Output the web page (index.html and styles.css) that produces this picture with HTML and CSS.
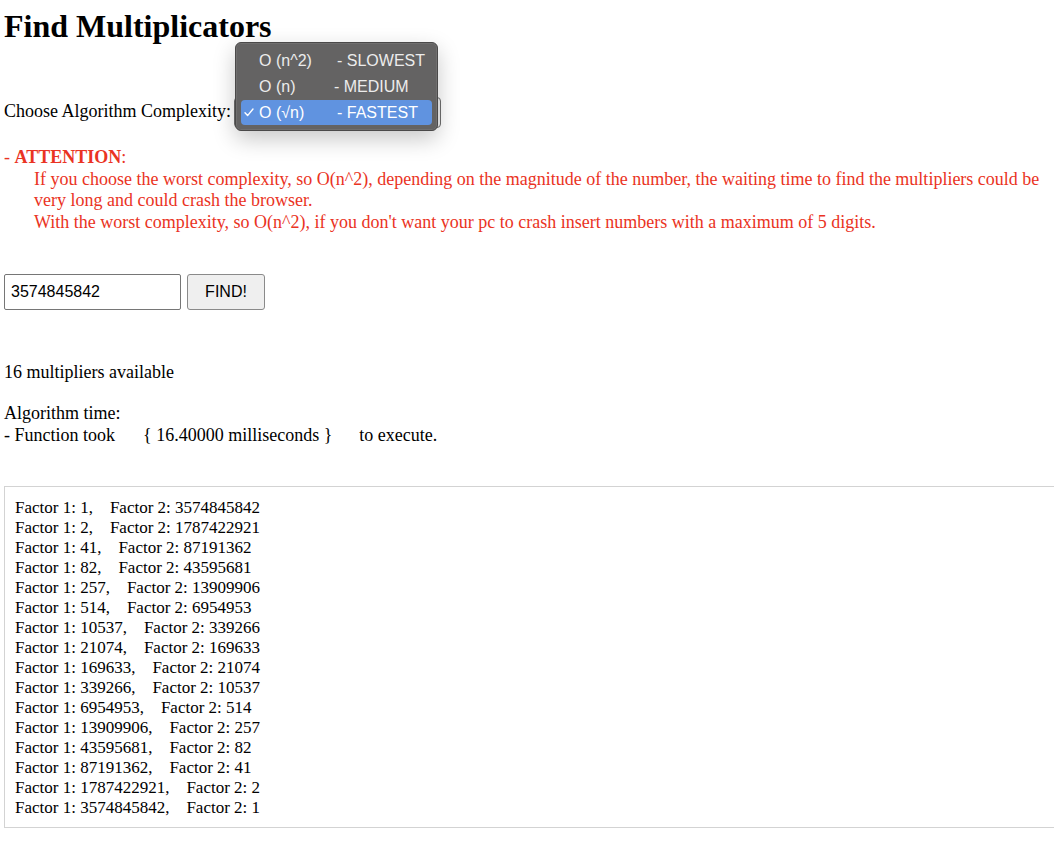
FILE: index.html
```html
<!DOCTYPE html>
<html lang="en">
<head>
<meta charset="utf-8">
<title>Find Multiplicators</title>
<link rel="stylesheet" href="styles.css">
</head>
<body>
<h1 class="title">Find Multiplicators</h1>

<div class="algo-row">
  <label class="algo-label">Choose Algorithm Complexity:</label>
  <div class="select-wrap">
    <div class="select-box"></div>
    <ul class="menu">
      <li class="menu-item"><span class="check"></span><span class="opt-name">O (n^2)</span><span class="opt-desc">- SLOWEST</span></li>
      <li class="menu-item"><span class="check"></span><span class="opt-name">O (n)</span><span class="opt-desc opt-desc-medium">- MEDIUM</span></li>
      <li class="menu-item is-selected"><span class="check"><svg width="10" height="9" viewBox="0 0 10 9"><polyline points="1,4.8 3.6,7.6 9,1" fill="none" stroke="#ffffff" stroke-width="1.4" stroke-linecap="round" stroke-linejoin="round"/></svg></span><span class="opt-name">O (√n)</span><span class="opt-desc">- FASTEST</span></li>
    </ul>
  </div>
</div>

<div class="attention">
  <div class="attention-head">- <strong>ATTENTION</strong>:</div>
  <div class="attention-body">
    <div class="att-line">If you choose the worst complexity, so O(n^2), depending on the magnitude of the number, the waiting time to find the multipliers could be</div>
    <div class="att-line">very long and could crash the browser.</div>
    <div class="att-line">With the worst complexity, so O(n^2), if you don't want your pc to crash insert numbers with a maximum of 5 digits.</div>
  </div>
</div>

<div class="find-row">
  <input class="num-input" type="text" value="3574845842">
  <button class="find-btn" type="button">FIND!</button>
</div>

<p class="count">16 multipliers available</p>

<div class="timing">
  <div>Algorithm time:</div>
  <div>- Function took<span class="took-value">{ 16.40000 milliseconds }</span>to execute.</div>
</div>

<div class="results">
  <div>Factor 1: 1,&nbsp;&nbsp;&nbsp; Factor 2: 3574845842</div>
  <div>Factor 1: 2,&nbsp;&nbsp;&nbsp; Factor 2: 1787422921</div>
  <div>Factor 1: 41,&nbsp;&nbsp;&nbsp; Factor 2: 87191362</div>
  <div>Factor 1: 82,&nbsp;&nbsp;&nbsp; Factor 2: 43595681</div>
  <div>Factor 1: 257,&nbsp;&nbsp;&nbsp; Factor 2: 13909906</div>
  <div>Factor 1: 514,&nbsp;&nbsp;&nbsp; Factor 2: 6954953</div>
  <div>Factor 1: 10537,&nbsp;&nbsp;&nbsp; Factor 2: 339266</div>
  <div>Factor 1: 21074,&nbsp;&nbsp;&nbsp; Factor 2: 169633</div>
  <div>Factor 1: 169633,&nbsp;&nbsp;&nbsp; Factor 2: 21074</div>
  <div>Factor 1: 339266,&nbsp;&nbsp;&nbsp; Factor 2: 10537</div>
  <div>Factor 1: 6954953,&nbsp;&nbsp;&nbsp; Factor 2: 514</div>
  <div>Factor 1: 13909906,&nbsp;&nbsp;&nbsp; Factor 2: 257</div>
  <div>Factor 1: 43595681,&nbsp;&nbsp;&nbsp; Factor 2: 82</div>
  <div>Factor 1: 87191362,&nbsp;&nbsp;&nbsp; Factor 2: 41</div>
  <div>Factor 1: 1787422921,&nbsp;&nbsp;&nbsp; Factor 2: 2</div>
  <div>Factor 1: 3574845842,&nbsp;&nbsp;&nbsp; Factor 2: 1</div>
</div>
</body>
</html>
```

FILE: styles.css
```css
html {
  overflow-x: hidden;
}

body {
  margin: 0;
  padding: 8px 4px 30px 4px;
  font-family: "Liberation Serif", "Times New Roman", serif;
  font-size: 18px;
  color: #000;
  background: #fff;
}

.title {
  margin: 0;
  font-size: 32px;
  font-weight: bold;
  line-height: 37px;
}

.algo-row {
  margin-top: 52px;
  display: flex;
  align-items: flex-start;
  height: 31px;
}

.algo-label {
  padding-top: 4px;
  line-height: 20.7px;
}

.select-wrap {
  position: relative;
  margin-left: 3px;
}

.select-box {
  width: 207px;
  height: 31px;
  box-sizing: border-box;
  border: 1px solid #6f6f6f;
  border-radius: 4px;
  background: #f0f0f0;
}

.menu {
  position: absolute;
  left: 1px;
  top: -55px;
  width: 203px;
  box-sizing: border-box;
  margin: 0;
  padding: 5px 5px;
  list-style: none;
  display: flex;
  flex-direction: column;
  gap: 1px;
  background: #646363;
  border: 1px solid #4a4949;
  border-radius: 6px;
  box-shadow: 0 8px 22px rgba(0, 0, 0, 0.22), inset 0 0 0 1px rgba(255, 255, 255, 0.08);
  font-family: "Liberation Sans", Arial, sans-serif;
  font-size: 16px;
  color: #ececec;
}

.menu-item {
  height: 25px;
  display: flex;
  align-items: center;
  padding-left: 3px;
  border-radius: 4px;
}

.menu-item.is-selected {
  background: #6093e0;
  color: #ffffff;
}

.check {
  width: 15px;
  display: flex;
  align-items: center;
}

.opt-name {
  width: 78px;
  white-space: nowrap;
}

.opt-desc {
  white-space: nowrap;
}

.opt-desc-medium {
  margin-left: -3px;
}

.attention {
  margin-top: 19px;
  color: #ea3323;
  line-height: 21.7px;
}

.attention-body {
  padding-left: 30px;
}

.att-line {
  white-space: nowrap;
}

.find-row {
  margin-top: 40px;
  display: flex;
  gap: 6px;
  height: 36px;
}

.num-input {
  width: 177px;
  height: 36px;
  box-sizing: border-box;
  margin: 0;
  padding: 0 6px;
  border: 1px solid #767676;
  border-radius: 2px;
  font-family: "Liberation Sans", Arial, sans-serif;
  font-size: 16px;
  color: #000;
  background: #fff;
}

.find-btn {
  width: 78px;
  height: 36px;
  box-sizing: border-box;
  margin: 0;
  padding: 0;
  border: 1px solid #8a8a8a;
  border-radius: 3px;
  background: #efefef;
  font-family: "Liberation Sans", Arial, sans-serif;
  font-size: 16px;
  color: #000;
}

.count {
  margin: 52px 0 0 0;
  line-height: 20.7px;
}

.timing {
  margin-top: 19px;
  line-height: 22.5px;
}

.took-value {
  margin: 0 27px 0 28px;
}

.results {
  margin-top: 39px;
  margin-right: -30px;
  padding: 11px 10px 9px 10px;
  border: 1px solid #d3d3d3;
  font-size: 17px;
  line-height: 20px;
}
```
